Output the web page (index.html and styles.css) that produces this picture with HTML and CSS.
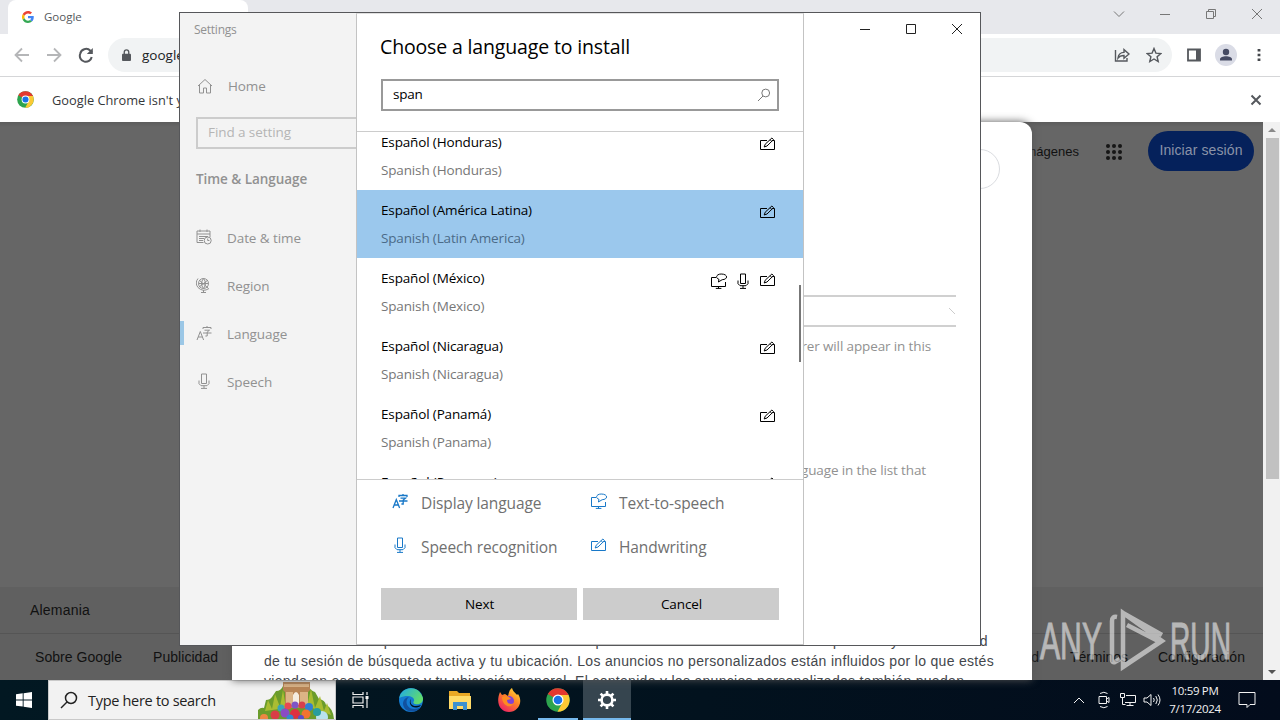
FILE: index.html
```html
<!DOCTYPE html>
<html lang="es">
<head>
<meta charset="utf-8">
<title>Settings</title>
<link rel="stylesheet" href="styles.css">
</head>
<body>
<svg class="defs" aria-hidden="true">
  <symbol id="pen" viewBox="0 0 16 16"><path d="M8 4.500H1.500v9h14v-9H13.500M5.200 11l1-2.800 6.700-6.200 1.600 1.600L8 10zM11.200 3.800l1.500 1.500"/></symbol>
  <symbol id="mic" viewBox="0 0 16 16"><path d="M5.500 1h5v9.500h-5zM3 7.500v3.200l2 2h6l2-2V7.500M8 12.700v2.500M5 15.400h6"/></symbol>
  <symbol id="tts" viewBox="0 0 18 16"><path d="M6 4.500H1.500v9h14V9M8.500 13.500v2M5.800 15.400h5.600M8.400 9l.6-2.600C4.800 4.800 6.500 1 11.200 1c7 0 7 5.500 1 5.700z"/></symbol>
  <symbol id="lang" viewBox="0 0 16 16"><path d="M1 15l3.300-8.500L7.600 15M2.200 12h4.200M7 4V2.500h8V4M11 1v1.500M8.500 5.200h5L11.200 7v4H9.400M7 8h8.500"/></symbol>
</svg>
<div class="desktop">
  <section class="chrome">
    <header class="tabstrip">
      <div class="tab">
        <svg class="g" viewBox="0 0 48 48"><path fill="#ea4335" d="M24 9.500c3.500 0 6.700 1.200 9.200 3.600l6.900-6.900C35.900 2.400 30.500 0 24 0 14.600 0 6.500 5.400 2.600 13.200l8 6.200C12.400 13.700 17.700 9.500 24 9.500z"/><path fill="#4285f4" d="M47 24.500c0-1.600-.2-3.100-.4-4.500H24v9h12.900c-.6 3-2.200 5.500-4.700 7.200l7.700 6C44.400 38 47 31.800 47 24.500z"/><path fill="#fbbc05" d="M10.500 28.600a14.500 14.500 0 010-9.200l-8-6.200a24 24 0 000 21.600z"/><path fill="#34a853" d="M24 48c6.500 0 11.900-2.100 15.900-5.800l-7.700-6c-2.200 1.500-4.900 2.300-8.200 2.300-6.300 0-11.600-4.200-13.500-9.900l-8 6.200C6.500 42.600 14.600 48 24 48z"/></svg>
        <span>Google</span>
      </div>
      <div class="wincontrols">
        <svg viewBox="0 0 12 12"><path d="M1 3.500l5 5 5-5"/></svg>
        <svg viewBox="0 0 12 12"><path d="M1 6.500h10"/></svg>
        <svg viewBox="0 0 12 12"><path d="M1.500 3.500h7v7h-7zM3.500 3.500v-2h7v7h-2"/></svg>
        <svg viewBox="0 0 12 12"><path d="M1 1l10 10M11 1L1 11"/></svg>
      </div>
    </header>
    <div class="toolbar">
      <svg class="nav off" viewBox="0 0 16 16"><path d="M15 8H2M8 1.500L1.500 8 8 14.500"/></svg>
      <svg class="nav off" viewBox="0 0 16 16"><path d="M1 8h13M8 1.500L14.500 8 8 14.500"/></svg>
      <svg class="nav" viewBox="0 0 16 16"><path d="M13.700 10A6 6 0 112.100 7a6 6 0 0110.300-3.200L14 5.500"/><path class="fill" d="M14.800 1v6h-6z"/></svg>
      <div class="omnibox">
        <svg class="lock" viewBox="0 0 10 14"><path d="M1 5h8q1 0 1 1v6q0 1-1 1H1q-1 0-1-1V6q0-1 1-1z"/><path class="ring" d="M2.500 5.500V3.300a2.500 2.500 0 015 0v2.200"/></svg>
        <span class="url">google.com</span>
        <svg class="share" viewBox="0 0 16 16"><path d="M1.500 3v11h11.500v-3M4 11c.5-4 2.500-5.500 6-5.600V2.600L15 7l-5 4.300V8.500C7 8.500 5.500 9 4 11z"/></svg>
        <svg class="star" viewBox="0 0 16 16"><path d="M8 1.500l1.900 4.600 4.900.4-3.700 3.200 1.100 4.800L8 12l-4.200 2.500 1.100-4.800L1.200 6.500l4.900-.4z"/></svg>
      </div>
      <svg class="panel" viewBox="0 0 14 14"><path d="M1 1.500h12v11H1z"/><path class="fill" d="M9 1h4v12H9z"/></svg>
      <svg class="avatar" viewBox="0 0 22 22"><circle cx="11" cy="11" r="11" fill="#dadce6"/><circle cx="11" cy="8" r="3.200" fill="#454a63"/><path fill="#454a63" d="M5 16.500v-1.300c0-4 12-4 12 0v1.300z"/></svg>
      <svg class="dots" viewBox="0 0 4 14"><path d="M.6 1h2.800v2.600H.6zM.6 5.700h2.800v2.600H.6zM.6 10.400h2.800V13H.6z"/></svg>
    </div>
    <div class="infobar">
      <svg class="logo" viewBox="0 0 48 48"><use href="#chromelogo"/></svg>
      <span>Google Chrome isn't your default browser</span>
      <svg class="dismiss" viewBox="0 0 12 12"><path d="M1.500 1.500l9 9M10.500 1.500l-9 9"/></svg>
    </div>
    <div class="viewport">
      <div class="page">
        <nav class="topnav">
          <a>Imágenes</a>
          <svg viewBox="0 0 16 16"><circle cx="2" cy="2" r="2"/><circle cx="8" cy="2" r="2"/><circle cx="14" cy="2" r="2"/><circle cx="2" cy="8" r="2"/><circle cx="8" cy="8" r="2"/><circle cx="14" cy="8" r="2"/><circle cx="2" cy="14" r="2"/><circle cx="8" cy="14" r="2"/><circle cx="14" cy="14" r="2"/></svg>
          <a class="login">Iniciar sesión</a>
        </nav>
        <footer class="foot">
          <div class="country">Alemania</div>
          <div class="links"><a class="about">Sobre Google</a><a>Publicidad</a><a class="priv">Privacidad</a><a class="terms">Términos</a><a class="conf">Configuración</a></div>
        </footer>
        <article class="consent">
          <div class="langpill"></div>
          <p class="l1">El contenido no personalizado se ve influido por factores como el contenido que ves y la actividad</p>
          <p class="l2">de tu sesión de búsqueda activa y tu ubicación. Los anuncios no personalizados están influidos por lo que estés</p>
          <p class="l3">viendo en ese momento y tu ubicación general. El contenido y los anuncios personalizados también pueden</p>
        </article>
      </div>
      <div class="scrollbar"><i class="up"></i><b></b><i class="down"></i></div>
    </div>
  </section>

  <footer class="taskbar">
    <div class="start"><svg viewBox="0 0 16 16"><path d="M0 2.200l6.700-.9v6.200H0zM7.600 1.200L16 0v7.500H7.600zM0 8.400h6.700v6.200L0 13.700zM7.600 8.400H16V16l-8.400-1.200z"/></svg></div>
    <div class="search">
      <svg class="mag" viewBox="0 0 18 18"><circle cx="11" cy="7" r="5.500"/><path d="M7 11l-6 6"/></svg>
      <span>Type here to search</span>
      <svg class="art" viewBox="0 0 78 38">
        <path fill="#6b9c2c" d="M1 38V29q3-3 6-2l2-8q4 0 6-3l4-6q5 0 7-5h25q3 5 7 6l4 7q6 1 7 6 7 3 8 14z"/>
        <path fill="#a9bd32" d="M8 30l3-11 4 9 3-15 5 13 3-17 3 18zM50 25l4-17 4 19 5-12 4 15 3-8 4 12z"/>
        <path fill="#b98555" d="M26 1h27v8l-2 2v16H28V11l-2-2z"/><path fill="#dcb486" d="M27 3h25v3H27zM29 11h7v13h-7zM43 11h8v13h-8z"/><path fill="#f5ede0" d="M36 24V14q3-6 6 0v10z"/>
        <g><circle cx="65" cy="36" r="6" fill="#b9e2ed"/><circle cx="24" cy="27" r="3.500" fill="#39a5b6"/><circle cx="31" cy="25" r="3.500" fill="#e84754"/><circle cx="38" cy="24" r="3.500" fill="#7e55c6"/><circle cx="45" cy="24" r="3.500" fill="#d8404c"/><circle cx="52" cy="26" r="4" fill="#327fd4"/><circle cx="60" cy="31" r="4" fill="#289d9e"/><circle cx="18" cy="34" r="4.500" fill="#d93d47"/><circle cx="28" cy="32" r="4.500" fill="#8a4cc4"/><circle cx="38" cy="33" r="5" fill="#df3040"/><circle cx="49" cy="33" r="4.500" fill="#f27331"/><circle cx="33" cy="37" r="3.500" fill="#3388cf"/><circle cx="44" cy="37" r="3" fill="#5b50c8"/><circle cx="7" cy="37" r="4" fill="#ee8743"/></g>
      </svg>
    </div>
    <div class="app"><svg class="tv" viewBox="0 0 18 18"><path d="M2 1v2.500h10V1M2 17v-2.500h10V17M2 6h10v6H2zM16 1v3M16 8v9"/><path class="fill" d="M14.500 5h3v3h-3z"/></svg></div>
    <div class="app edge"><svg viewBox="0 0 24 24"><defs><linearGradient id="ea" x2="1" y2=".5"><stop stop-color="#1fa9e8"/><stop offset="1" stop-color="#61dc6d"/></linearGradient></defs><circle cx="12" cy="12" r="12" fill="#147bd2"/><path fill="url(#ea)" d="M.3 10C2-2 20-4 24 10c.5 5-4 7-8 6-2-.6-2-1.500-1-3 1-4-6-7-14.700-3z"/><path fill="#11519f" d="M10 9c-5 4-2 12 5 12 3 0 5-.8 7-2-5 7-17 6-18-3 0-4 3-7 6-7z"/><path fill="#04141f" d="M12 11c-2 5 2 9 10 6q-1 2-4 2.500c-6 1-9-5-6-8.500z"/></svg></div>
    <div class="app"><svg viewBox="0 0 24 24"><path fill="#e9a825" d="M1 3h8l2 2h11v15H1z"/><path fill="#ffdb68" d="M1 8h22v13H1z"/><path fill="#3c91d0" d="M5 14h14v8h-4v-4H9v4H5z"/></svg></div>
    <div class="app"><svg viewBox="0 0 24 24"><defs><linearGradient id="ff" x1=".9" x2=".2" y2="1"><stop stop-color="#ffe339"/><stop offset=".45" stop-color="#ff8426"/><stop offset="1" stop-color="#ed1d67"/></linearGradient></defs><path fill="url(#ff)" d="M3 4l2 3 3-1 3 2c1-3 1-6 4-8 1 4 4 5 5 7l1-1c6 9-1 18-9 18S-2 16 3 4z"/><circle cx="12" cy="13" r="5" fill="#8042d6"/><path fill="#ff8b20" d="M5 9q4-2 7 0l2 2-4 1c0 4 4 5 7 3-4 7-12 2-12-6z"/></svg></div>
    <div class="app open"><svg viewBox="0 0 48 48"><g id="chromelogo"><circle cx="24" cy="24" r="23.500" fill="#2da44e"/><path fill="#e4392f" d="M24 24L3.600 12A23.500 23.500 0 0144.400 12.500L45 14H24z"/><path fill="#fcc934" d="M24 14h21A23.500 23.500 0 0123 47.500L33 29z"/><circle cx="24" cy="24" r="11" fill="#fff"/><circle cx="24" cy="24" r="8.600" fill="#1a73e8"/></g></svg></div>
    <div class="app open active"><svg class="gear" viewBox="0 0 20 20"><circle cx="10" cy="10" r="5.400"/><path d="M10 1v3.200M10 15.800V19M1 10h3.200M15.800 10H19M3.600 3.600L6 6M14 14l2.400 2.400M16.400 3.600L14 6M6 14l-2.400 2.400"/></svg></div>
    <div class="tray">
      <svg class="t1" viewBox="0 0 12 8"><path d="M1 7l5-5 5 5"/></svg>
      <svg class="t2" viewBox="0 0 14 18"><path d="M2 5.500h7.500v7H2zM9.500 8l2.500-1.500v5L9.500 10M3 2.500q4-2.500 7.500 0M3 15.500q4 2.500 7.500 0"/></svg>
      <svg class="t3" viewBox="0 0 18 16"><path d="M7 3.500h9.500v7H6M11 10.500v3M7.500 13.500h7M1.500 1.500h4v4h-4zM3.500 5.500v7h3"/></svg>
      <svg class="t4" viewBox="0 0 18 16"><path d="M1 6h3l4-3.500v11L4 10H1zM10.500 6q1.500 2 0 4M12.800 4q3 4 0 8M15 2.500q4 5.500 0 11"/></svg>
      <div class="clock"><span>10:59 PM</span><span>7/17/2024</span></div>
      <svg class="t5" viewBox="0 0 18 18"><path d="M1 1.500h16v12h-5l-3 3v-3H1z"/></svg>
    </div>
  </footer>

  <svg class="watermark" viewBox="0 0 196 64">
    <text x="1" y="51" textLength="62" lengthAdjust="spacingAndGlyphs">ANY</text>
    <path d="M81 51l-5 3q-3 1-3-2V13q0-5 5-4M84 5v54l39-26zM88 17l33 17M84 5l39 22M86 57l36-24"/>
    <text x="131" y="51" textLength="61" lengthAdjust="spacingAndGlyphs">RUN</text>
  </svg>

  <section class="settings">
    <aside class="side">
      <div class="apptitle">Settings</div>
      <div class="home"><svg viewBox="0 0 16 16"><path d="M1 8l7-6.500L15 8M2.500 7v8h4v-5h3v5h4V7"/></svg>Home</div>
      <div class="find">Find a setting</div>
      <h2>Time &amp; Language</h2>
      <ul>
        <li><svg viewBox="0 0 16 16"><path d="M7.500 13.500H1V2h13v6M1 5h13M4 .5V3M11 .5V3M3 7.500h9M3 9.500h5M3 11.500h4"/><circle cx="11.700" cy="11.500" r="3.500"/><path d="M11.700 9.500v2h1.700"/></svg>Date &amp; time</li>
        <li><svg viewBox="0 0 16 16"><circle cx="7.500" cy="6.500" r="5"/><path d="M3 3l9 8M12 3l-9 7M7.500 1.500q-4 5 0 10M7.500 1.500q4 5 0 10M2.500 6.500h10M2 1.500Q-1.500 6 2 10.500 7 15.500 13 11.500M7.500 13v2.500M5 15.500h5"/></svg>Region</li>
        <li class="current"><svg viewBox="0 0 16 16"><use href="#lang"/></svg>Language</li>
        <li><svg viewBox="0 0 16 16"><use href="#mic"/></svg>Speech</li>
      </ul>
    </aside>
    <main class="content">
      <div class="controls">
        <svg viewBox="0 0 12 12"><path d="M1 6.500h10"/></svg>
        <svg viewBox="0 0 12 12"><path d="M1.500 1.500h9v9h-9z"/></svg>
        <svg viewBox="0 0 12 12"><path d="M1 1l10 10M11 1L1 11"/></svg>
      </div>
      <div class="select"><svg viewBox="0 0 8 8"><path d="M1 1l6 6"/></svg></div>
      <p class="p1">Windows features like Settings and File Explorer will appear in this</p>
      <p class="p2">Apps and websites will appear in the first language in the list that</p>
    </main>

    <div class="dialog" role="dialog">
      <h1>Choose a language to install</h1>
      <div class="query"><span>span</span><svg viewBox="0 0 14 14"><circle cx="8.700" cy="5" r="3.900"/><path d="M6 8l-5 5"/></svg></div>
      <div class="list">
        <div class="row"><div><b>Español (Honduras)</b><span>Spanish (Honduras)</span></div><svg viewBox="0 0 16 16"><use href="#pen"/></svg></div>
        <div class="row chosen"><div><b>Español (América Latina)</b><span>Spanish (Latin America)</span></div><svg viewBox="0 0 16 16"><use href="#pen"/></svg></div>
        <div class="row"><div><b>Español (México)</b><span>Spanish (Mexico)</span></div><svg class="wide" viewBox="0 0 18 16"><use href="#tts"/></svg><svg class="micr" viewBox="0 0 16 16"><use href="#mic"/></svg><svg viewBox="0 0 16 16"><use href="#pen"/></svg></div>
        <div class="row"><div><b>Español (Nicaragua)</b><span>Spanish (Nicaragua)</span></div><svg viewBox="0 0 16 16"><use href="#pen"/></svg></div>
        <div class="row"><div><b>Español (Panamá)</b><span>Spanish (Panama)</span></div><svg viewBox="0 0 16 16"><use href="#pen"/></svg></div>
        <div class="row"><div><b>Español (Paraguay)</b></div><svg viewBox="0 0 16 16"><use href="#pen"/></svg></div>
        <i class="thumb"></i>
      </div>
      <div class="legend">
        <div><svg class="heavy" viewBox="0 0 16 16"><use href="#lang"/></svg>Display language</div>
        <div><svg class="wide" viewBox="0 0 18 16"><use href="#tts"/></svg>Text-to-speech</div>
        <div><svg viewBox="0 0 16 16"><use href="#mic"/></svg>Speech recognition</div>
        <div><svg viewBox="0 0 16 16"><use href="#pen"/></svg>Handwriting</div>
      </div>
      <div class="buttons"><button>Next</button><button>Cancel</button></div>
    </div>
  </section>
</div>
</body>
</html>
```

FILE: styles.css
```css
* { box-sizing: border-box; }
body { margin: 0; font-family: "Open Sans", "Noto Sans", sans-serif; }
svg { flex: none; fill: none; stroke: currentColor; }
svg use { stroke: inherit; }
h1, h2, p, ul { margin: 0; padding: 0; }
.defs { display: none; }
.desktop { position: relative; width: 1280px; height: 720px; overflow: hidden; display: flex; flex-direction: column; }

/* Browser window */
.chrome { height: 680px; display: flex; flex-direction: column; background: #fff; }
.tabstrip { height: 34px; background: #e7e8ec; display: flex; justify-content: space-between; padding: 0 17px 0 8px; }
.tab { width: 240px; background: #fff; border-radius: 8px 8px 0 0; display: flex; align-items: center; gap: 10px; padding-left: 14px; font-size: 11.500px; color: #55585c; }
.tab span { margin-top: -2px; }
.g { width: 12px; height: 12px; stroke: none; }
.wincontrols { display: flex; align-items: center; gap: 34px; padding-bottom: 6px; color: #777; }
.wincontrols svg { width: 12px; height: 12px; }
.toolbar { height: 43px; border-bottom: 1px solid #d5d6d8; display: flex; align-items: center; padding: 0 19px 0 14px; color: #55585d; }
.nav { width: 16px; height: 16px; margin-right: 16px; stroke-width: 2; }
.nav.off { color: #b5b6b8; stroke-width: 1.800; }
.fill { fill: currentColor; stroke: none; }
.omnibox { flex: 1; height: 34px; border-radius: 17px; background: #f1f3f4; display: flex; align-items: center; padding: 0 10px 0 14px; margin-left: -2px; }
.lock { width: 9px; height: 13px; fill: #55585d; stroke: none; }
.lock .ring { fill: none; stroke: #55585d; stroke-width: 1.500; }
.url { flex: 1; margin-left: 11px; color: #202124; font-size: 13.500px; }
.share, .star { width: 16px; height: 16px; margin-left: 16px; stroke-width: 1.400; }
.panel { width: 14px; height: 14px; margin-left: 15px; stroke-width: 1.800; }
.avatar { width: 22px; height: 22px; margin-left: 14px; stroke: none; }
.dots { width: 4px; height: 14px; margin-left: 20px; fill: #45484d; stroke: none; }
.infobar { height: 45px; display: flex; align-items: center; padding: 0 18px 0 17px; gap: 18px; font-size: 12.800px; color: #35373a; }
.infobar span { flex: 1; }
.logo { width: 17px; height: 17px; stroke: none; }
.dismiss { width: 12px; height: 12px; stroke-width: 2; color: #55585d; }
.viewport { flex: 1; display: flex; min-height: 0; }
.page { position: relative; flex: 1; background: linear-gradient(#5c5c5c, #666 5px); display: flex; flex-direction: column; font-family: "Liberation Sans", Arial, sans-serif; color: #111; }
.topnav { flex: 1; display: flex; align-items: flex-start; justify-content: flex-end; padding: 9px 9px 0; font-size: 13px; line-height: 41px; }
.topnav svg { width: 16px; height: 16px; margin: 13px 26px 0 27px; fill: #161616; stroke: none; }
.topnav .login { width: 106px; height: 40px; line-height: 38px; border-radius: 20px; background: #05215b; color: #8a93a8; text-align: center; font-size: 14px; letter-spacing: .1px; }
.foot { height: 93px; background: #606060; font-size: 14px; }
.country { height: 47px; border-bottom: 1px solid #555; padding-left: 30px; line-height: 46px; letter-spacing: .2px; }
.links { display: flex; line-height: 47px; padding: 0 18px 0 35px; letter-spacing: .05px; }
.links a { margin-right: 31px; }
.links .priv { margin-left: auto; }
.links .terms { margin-right: 30px; letter-spacing: -.05px; }
.links .conf { margin-right: 0; }
.consent { position: absolute; left: 232px; top: 0; width: 800px; height: 558px; background: #fff; border-radius: 0 12px 0 0; overflow: hidden; padding: 27px 32px 0; box-shadow: 0 0 8px #555; color: #44474c; font-size: 14px; line-height: 20px; white-space: nowrap; display: flex; flex-direction: column; }
.langpill { flex: none; align-self: flex-end; width: 130px; height: 40px; border: 1px solid #dadce0; border-radius: 20px; margin-bottom: 442px; }
.consent p { flex: none; }
.l1 { letter-spacing: 1.210px; }
.l2 { letter-spacing: .315px; }
.l3 { letter-spacing: .3px; }
.scrollbar { width: 17px; background: #f1f1f1; display: flex; flex-direction: column; align-items: center; justify-content: space-between; padding: 6px 1px 6px 2px; }
.scrollbar b { width: 13px; height: 341px; background: #c1c1c1; margin-bottom: 189px; margin-top: 4px; }
.scrollbar i { border: 4px solid transparent; }
.up { border-bottom-color: #8a8a8a !important; border-top: 0 !important; }
.down { border-top-color: #555 !important; border-bottom: 0 !important; }

/* Taskbar */
.taskbar { height: 40px; display: flex; background: linear-gradient(90deg, #021822, #02121e 55%, #030c1c); color: #f2f2f2; }
.start { width: 48px; display: flex; align-items: center; justify-content: center; }
.start svg { width: 16px; height: 16px; fill: #fff; stroke: none; }
.search { width: 288px; height: 40px; background: #f2f2f2; border: 1px solid #c9c9c9; display: flex; align-items: center; padding-left: 11px; color: #222; font-size: 14.500px; }
.search span { flex: 1; margin-left: 10px; white-space: nowrap; letter-spacing: -.3px; }
.mag { width: 18px; height: 18px; stroke-width: 1.500; }
.art { width: 78px; height: 38px; stroke: none; }
.app { width: 48px; margin-right: 1px; display: flex; align-items: center; justify-content: center; }
.app.edge { margin-left: 2px; }
.app svg { width: 24px; height: 24px; stroke: none; }
.app .tv { width: 18px; height: 18px; stroke: #eee; stroke-width: 1.200; }
.app .gear { width: 20px; height: 20px; stroke: #fff; stroke-width: 2.600; }
.app.open { border-bottom: 2px solid #76b9ed; width: 40px; margin: 0 5px 0 4px; padding-top: 2px; }
.app.active { width: 48px; margin: 0; background: #36454f; }
.tray { margin-left: auto; display: flex; align-items: center; padding-right: 24px; }
.t1 { width: 12px; height: 8px; }
.t2 { width: 14px; height: 18px; margin-left: 12px; }
.t3 { width: 18px; height: 16px; margin-left: 8px; }
.t4 { width: 18px; height: 16px; margin-left: 6px; }
.clock { width: 64px; margin-left: 2px; margin-right: -1px; display: flex; flex-direction: column; align-items: center; font-size: 11.500px; line-height: 18px; letter-spacing: -.35px; }
.t5 { width: 18px; height: 18px; margin-left: 12px; }
.watermark { position: absolute; left: 1039px; top: 608px; width: 196px; height: 64px; opacity: .55; color: #fff; stroke-width: 4.500; }
.watermark text { font: 52px "Liberation Sans", Arial, sans-serif; fill: #fff; stroke: #fff; stroke-width: 1; }

/* Settings window */
.settings { position: absolute; left: 179px; top: 12px; width: 802px; height: 634px; border: 1px solid #56575a; background: #fff; display: flex; font-size: 13.500px; color: #919191; }
.side { width: 177px; background: #f3f3f3; }
.side svg { width: 16px; height: 16px; }
.apptitle { padding-left: 14px; font-size: 12px; line-height: 34px; letter-spacing: -.25px; }
.home { height: 48px; margin-top: 15px; display: flex; align-items: center; gap: 15px; padding-left: 17px; letter-spacing: -.1px; }
.find { margin: 7px 0 0 16px; height: 32px; border: 2px solid #ccc; border-right: 0; padding-left: 10px; line-height: 27px; color: #b5b5b5; letter-spacing: -.08px; }
.side h2 { font-size: 13.500px; font-weight: 600; line-height: 20px; padding: 20px 0 0 16px; letter-spacing: -.05px; }
.side ul { list-style: none; margin-top: 25px; letter-spacing: -.08px; }
.side li { height: 48px; display: flex; align-items: center; gap: 15px; padding-left: 16px; }
.side li svg { margin-top: -2px; }
.current { background: linear-gradient(#9bc7e6, #9bc7e6) 0 45% / 4px 24px no-repeat; }
.content { flex: 1; display: flex; flex-direction: column; align-items: flex-end; }
.controls { width: 138px; height: 32px; display: flex; align-items: center; justify-content: space-around; color: #222; }
.controls svg { width: 12px; height: 12px; }
.select { width: 420px; height: 32px; margin: 250px 24px 0 0; border: 2px solid #d0d0d0; border-width: 2px 0; display: flex; align-items: center; justify-content: flex-end; color: #ccc; }
.select svg { width: 8px; height: 8px; }
.content p { line-height: 20px; white-space: nowrap; }
.p1 { margin: 9px 49px 0 0; letter-spacing: -.13px; }
.p2 { margin: 104px 54px 0 0; letter-spacing: -.13px; }

/* Language dialog */
.dialog { position: absolute; left: 176px; top: 0; width: 448px; height: 632px; background: #fff; border: 1px solid #c3c3c3; border-top-color: #e0e0e0; display: flex; flex-direction: column; color: #000; }
.dialog h1 { font-size: 19.500px; font-weight: 400; line-height: 30px; padding: 18px 0 0 23px; letter-spacing: -.15px; }
.query { margin: 17px 24px 20px; height: 32px; border: 2px solid #999; display: flex; align-items: center; justify-content: space-between; padding: 0 6px 2px 10px; letter-spacing: -.25px; }
.query svg { width: 14px; height: 14px; color: #777; margin-top: 2px; }
.list { position: relative; height: 349px; border: 1px solid #ccc; border-width: 1px 0; overflow: hidden; display: flex; flex-direction: column; letter-spacing: -.15px; }
.row { flex: none; height: 68px; display: flex; align-items: flex-start; padding: 6px 28px 0 24px; }
.row:first-child { margin-top: -10px; }
.row div { flex: 1; display: flex; flex-direction: column; line-height: 28px; }
.row b { font-weight: 400; }
.row span { color: #777; }
.row svg { width: 16px; height: 16px; margin: 8px 0 0 8px; }
.row .wide { width: 18px; margin: 9px -1px 0 0; }
.row .micr { margin-top: 9px; }
.chosen { background: #9bc8ed; }
.row.chosen span { color: #4b6b88; }
.thumb { position: absolute; right: 2px; top: 153px; width: 2px; height: 77px; background: #777; }
.legend { display: grid; grid-template-columns: 198px 1fr; grid-auto-rows: 44px; padding: 1px 0 0 35px; font-size: 15.500px; color: #707070; letter-spacing: -.1px; }
.legend div { display: flex; align-items: center; gap: 13px; }
.legend svg { width: 16px; height: 16px; color: #1878c8; margin-bottom: 4px; }
.legend .heavy { stroke-width: 1.300; }
.legend .wide { width: 18px; margin-right: -2px; }
.buttons { display: flex; gap: 6px; padding: 19px 24px 0; }
.buttons button { flex: 1; height: 32px; border: 0; background: #ccc; font: 13.500px "Open Sans", sans-serif; color: #000; padding: 0 0 0 1px; letter-spacing: -.1px; }
```
